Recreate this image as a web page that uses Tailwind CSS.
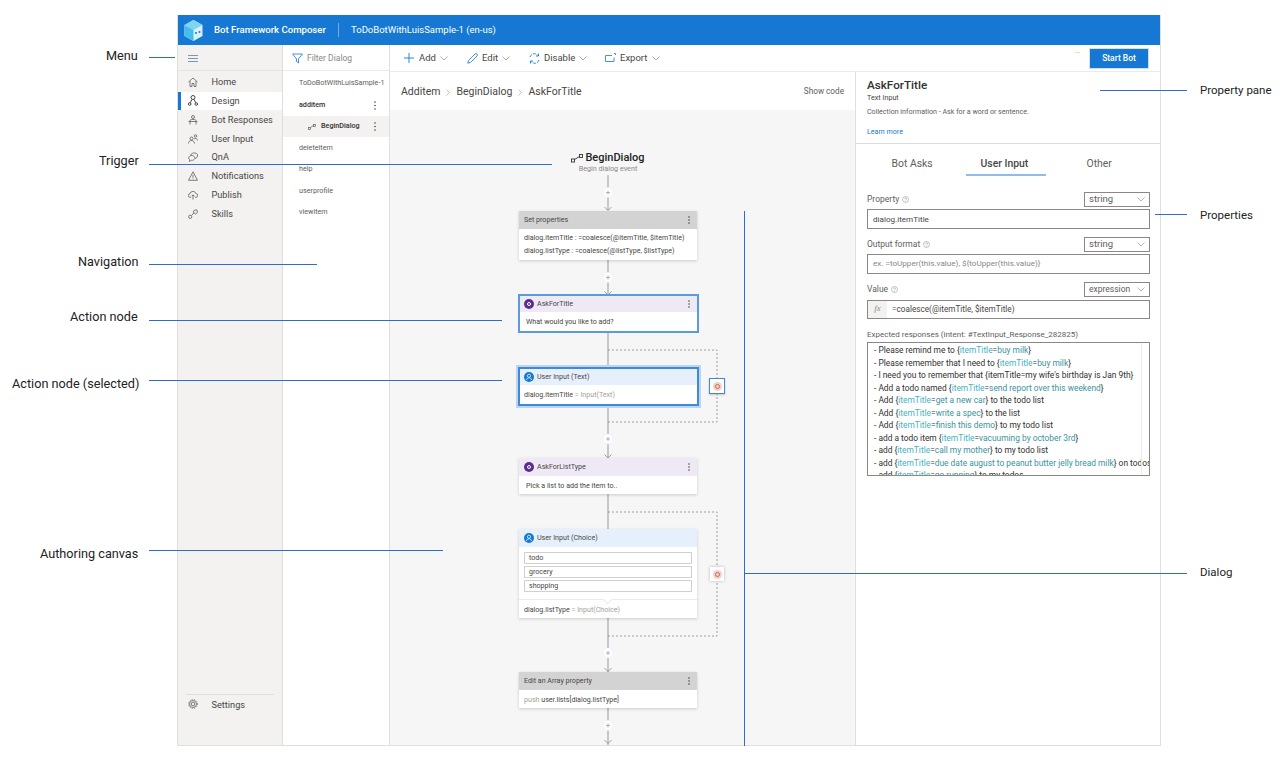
<!DOCTYPE html>
<html lang="en">
<head>
<meta charset="UTF-8" />
<title>Bot Framework Composer</title>
<script src="https://cdn.jsdelivr.net/npm/@tailwindcss/browser@4"></script>
</head>
<body class="relative w-[1285px] h-[760px] overflow-hidden bg-white font-['Roboto',sans-serif] text-[#323130]">

<!-- app frame -->
<div class="ml-[177px] mt-[15px] w-[984px] h-[731px] border-x border-b border-[#e1dfdd] flex flex-col">
  <!-- title bar -->
  <header class="h-[30px] shrink-0 bg-[#1678d3] text-white flex items-center pl-[6px]">
    <svg class="w-[19px] h-[21px]" viewBox="0 0 19 21"><polygon points="9.5,0 18.5,5 18.5,16 9.5,21 .5,16 .5,5" fill="#d6f1fb"/><polygon points="9.5,0 18.5,5 9.5,10 .5,5" fill="#7fd4f4"/><polygon points=".5,5 9.5,10 9.5,21 .5,16" fill="#45bdea"/><circle cx="12" cy="13" r="1" fill="#1678d3"/><circle cx="15.5" cy="12" r="1" fill="#1678d3"/></svg>
    <span class="ml-[11px] text-[9.6px] font-medium w-[113px] whitespace-nowrap">Bot Framework Composer</span>
    <span class="ml-[11px] w-px h-[14px] bg-white/40"></span>
    <span class="ml-[12px] text-[9.5px] whitespace-nowrap">ToDoBotWithLuisSample-1 (en-us)</span>
  </header>

  <div class="flex-1 flex min-h-0">
    <!-- main nav -->
    <nav class="w-[105px] shrink-0 bg-[#f3f2f1] border-r border-[#dfdddb] flex flex-col text-[9.2px] text-[#484644]">
      <div class="h-[26px] border-b border-[#e6e4e2] flex items-center pl-[10px]">
        <svg class="w-[10px] h-[7px] mt-[1px]" viewBox="0 0 10 7" fill="none" stroke="#5b7fa6" stroke-width=".8"><path d="M0 .5h10M0 3.5h10M0 6.5h10"/></svg>
      </div>
      <div class="pt-[1.8px]">
        <div class="h-[18.8px] flex items-center pl-[10px] gap-[13.5px]">
          <svg class="w-[10px] h-[10px]" viewBox="0 0 10 10" fill="none" stroke="#605e5c" stroke-width=".8"><path d="M.5 5 5 1l4.5 4M2 4v5.500h2V6.500h2v3h2V4"/></svg><span>Home</span>
        </div>
        <div class="h-[18.8px] flex items-center pl-[7px] gap-[13.5px] bg-white border-l-[3px] border-[#1678d3]">
          <svg class="w-[10px] h-[11px]" viewBox="0 0 10 11" fill="none" stroke="#323130" stroke-width=".9"><circle cx="5" cy="2.5" r="2"/><circle cx="1.7" cy="9" r="1.3"/><circle cx="8.3" cy="9" r="1.3"/><path d="M4 4.500 2.200 7.800M6 4.500l1.800 3.300"/></svg><span>Design</span>
        </div>
        <div class="h-[18.8px] flex items-center pl-[10px] gap-[13.5px]">
          <svg class="w-[10px] h-[10px]" viewBox="0 0 10 10" fill="none" stroke="#605e5c" stroke-width=".8"><circle cx="5" cy="2" r="1.5"/><path d="M2 9.500V6a1.500 1.500 0 0 1 1.500-1.500h3A1.500 1.500 0 0 1 8 6v3.500M.5 6.500h9"/></svg><span>Bot Responses</span>
        </div>
        <div class="h-[18.8px] flex items-center pl-[10px] gap-[13.5px]">
          <svg class="w-[10px] h-[10px]" viewBox="0 0 10 10" fill="none" stroke="#605e5c" stroke-width=".8"><circle cx="3.5" cy="4.5" r="1.5"/><circle cx="7.5" cy="2" r="1.3"/><path d="M.5 9.500c0-4 6-4 6 0M6 5c1.500-1.200 3.500-.5 3.500 1.500"/></svg><span>User Input</span>
        </div>
        <div class="h-[18.8px] flex items-center pl-[10px] gap-[13.5px]">
          <svg class="w-[10px] h-[10px]" viewBox="0 0 10 10" fill="none" stroke="#605e5c" stroke-width=".8"><path d="M2.500 3.200C3 1.500 5 .8 7 1s2.800 1.500 2.500 3S8 6.500 7 6.300"/><path d="M.7 6C.7 4.300 2.500 3.300 4.200 3.500S7 5 6.800 6.300 5 8.500 3.500 8.300L1.500 9.500l.2-1.800C1 7.300.7 6.700.7 6Z"/></svg><span>QnA</span>
        </div>
        <div class="h-[18.8px] flex items-center pl-[10px] gap-[13.5px]">
          <svg class="w-[10px] h-[10px]" viewBox="0 0 10 10" fill="none" stroke="#605e5c" stroke-width=".8"><path d="M5 .8.500 9.300h9ZM5 3.800v3M5 7.500v.8"/></svg><span>Notifications</span>
        </div>
        <div class="h-[18.8px] flex items-center pl-[10px] gap-[13.5px]">
          <svg class="w-[10px] h-[10px]" viewBox="0 0 10 10" fill="none" stroke="#605e5c" stroke-width=".8"><path d="M3 7.300H2.200A1.800 1.800 0 0 1 2 3.700 3 3 0 0 1 7.800 3.500 1.900 1.900 0 0 1 7.800 7.300H7M5 9.500V5M3.500 6.300 5 4.800l1.500 1.500"/></svg><span>Publish</span>
        </div>
        <div class="h-[18.8px] flex items-center pl-[10px] gap-[13.5px]">
          <svg class="w-[10px] h-[10px]" viewBox="0 0 10 10" fill="none" stroke="#605e5c" stroke-width=".8"><circle cx="2.2" cy="7.8" r="1.6"/><path d="M3.500 6.500 6 4M6 1.500 8.800.8 9.500 3.500 7.500 5 5.200 3.300Z"/></svg><span>Skills</span>
        </div>
      </div>
      <div class="mt-auto mx-[8px] h-[51px] border-t border-[#dfdddb] flex items-start pt-[3px] gap-[13.5px] pl-[2px]">
        <svg class="w-[10px] h-[10px] mt-[1px]" viewBox="0 0 10 10" fill="none" stroke="#605e5c" stroke-width=".8"><circle cx="5" cy="5" r="1.8"/><circle cx="5" cy="5" r="3.5"/><circle cx="5" cy="5" r="4.5" stroke-dasharray="1 1.400"/></svg><span>Settings</span>
      </div>
    </nav>

    <!-- dialog list -->
    <aside class="w-[107px] shrink-0 bg-white border-r border-[#e1dfdd] flex flex-col text-[7.2px] text-[#605e5c]">
      <div class="h-[26px] pt-[2px] border-b border-[#edebe9] flex items-center pl-[9px] gap-[4px] text-[8.5px] text-[#8a8886]">
        <svg class="w-[11px] h-[11px]" viewBox="0 0 11 11" fill="none" stroke="#1678d3" stroke-width=".8"><path d="M.5 1h10L6.500 5.800V10L4.500 8.500V5.800Z"/></svg><span>Filter Dialog</span>
      </div>
      <div class="pt-[1.5px]">
        <div class="h-[21.5px] flex items-center pl-[16px] pt-[1px] whitespace-nowrap">ToDoBotWithLuisSample-1</div>
        <div class="h-[21.5px] flex items-center justify-between pl-[16px] pr-[13px] pt-[1px] font-medium text-[#323130]">additem
          <svg class="w-[2px] h-[9px]" viewBox="0 0 2 9" fill="#484644"><circle cx="1" cy="1" r=".8"/><circle cx="1" cy="4.5" r=".8"/><circle cx="1" cy="8" r=".8"/></svg>
        </div>
        <div class="h-[21.5px] flex items-center bg-[#f3f2f1] pl-[25px] pr-[13px] pt-[1px] gap-[4px] font-medium text-[#323130]">
          <svg class="w-[8px] h-[6px]" viewBox="0 0 8 6" fill="none" stroke="#605e5c" stroke-width=".7"><rect x=".4" y="3.4" width="2" height="2"/><rect x="5.6" y=".4" width="2" height="2"/><path d="M2.400 3.400 5.600 1.500"/></svg>
          <span class="ml-[1px]">BeginDialog</span>
          <svg class="ml-auto w-[2px] h-[9px]" viewBox="0 0 2 9" fill="#484644"><circle cx="1" cy="1" r=".8"/><circle cx="1" cy="4.5" r=".8"/><circle cx="1" cy="8" r=".8"/></svg>
        </div>
        <div class="h-[21.5px] flex items-center pl-[16px] pt-[1px]">deleteitem</div>
        <div class="h-[21.5px] flex items-center pl-[16px] pt-[1px]">help</div>
        <div class="h-[21.5px] flex items-center pl-[16px] pt-[1px]">userprofile</div>
        <div class="h-[21.5px] flex items-center pl-[16px] pt-[1px]">viewitem</div>
      </div>
    </aside>

    <!-- main -->
    <main class="flex-1 min-w-0 flex flex-col">
      <!-- toolbar -->
      <div class="h-[27px] shrink-0 border-b border-[#edebe9] flex items-center pl-[14px] pr-[12px] text-[9.5px] text-[#484644]">
        <svg class="w-[10px] h-[10px]" viewBox="0 0 10 10" stroke="#1678d3" stroke-width=".9"><path d="M5 0v10M0 5h10"/></svg>
        <span class="ml-[5px] w-[17px]">Add</span>
        <svg class="ml-[4px] w-[8px] h-[5px]" viewBox="0 0 8 5" fill="none" stroke="#8a8886" stroke-width=".7"><path d="m.5.5 3.500 3.500L7.500.5"/></svg>
        <svg class="ml-[19px] w-[11px] h-[11px]" viewBox="0 0 11 11" fill="none" stroke="#1678d3" stroke-width=".8"><path d="M.8 10.200 1.500 7.500 8 1a1.300 1.300 0 0 1 2 2L3.500 9.500Z"/></svg>
        <span class="ml-[4px] w-[16px]">Edit</span>
        <svg class="ml-[4px] w-[8px] h-[5px]" viewBox="0 0 8 5" fill="none" stroke="#8a8886" stroke-width=".7"><path d="m.5.5 3.500 3.500L7.500.5"/></svg>
        <svg class="ml-[19px] w-[11px] h-[11px]" viewBox="0 0 11 11" fill="none" stroke="#1678d3" stroke-width=".9"><path d="M1 4A4.600 4.600 0 0 1 9 2.500M10 7A4.600 4.600 0 0 1 2 8.500" stroke-dasharray="3 1"/><path d="M9.500.5v2.500H7M1.500 10.500V8H4"/></svg>
        <span class="ml-[4px] w-[30px]">Disable</span>
        <svg class="ml-[5px] w-[8px] h-[5px]" viewBox="0 0 8 5" fill="none" stroke="#8a8886" stroke-width=".7"><path d="m.5.5 3.500 3.500L7.500.5"/></svg>
        <svg class="ml-[18px] w-[11px] h-[10px]" viewBox="0 0 11 10" fill="none" stroke="#1678d3" stroke-width=".8"><path d="M9 4.500V8.500H.5V2.500H7M9 .5h1.500V2"/></svg>
        <span class="ml-[4px] w-[27px]">Export</span>
        <svg class="ml-[5px] w-[8px] h-[5px]" viewBox="0 0 8 5" fill="none" stroke="#8a8886" stroke-width=".7"><path d="m.5.5 3.500 3.500L7.500.5"/></svg>
        <span class="ml-auto mb-[11px] w-[5px] h-px bg-[#f6e58d]"></span>
        <button class="ml-[10px] w-[58px] h-[19px] bg-[#1678d3] text-white text-[8.5px] font-medium shadow-[0_0_0_1px_#cfe2f5]">Start Bot</button>
      </div>

      <div class="flex-1 flex min-h-0">
        <!-- authoring area -->
        <section class="w-[466px] shrink-0 flex flex-col border-r border-[#e1dfdd]">
          <div class="h-[38px] shrink-0 pt-[2px] flex items-center pl-[11px] pr-[11px] text-[10.5px] text-[#484644]">
            <span>Additem</span>
            <svg class="mx-[6px] w-[4px] h-[7px]" viewBox="0 0 4 7" fill="none" stroke="#a19f9d" stroke-width=".6"><path d="m.5.5 3 3-3 3"/></svg>
            <span>BeginDialog</span>
            <svg class="mx-[6px] w-[4px] h-[7px]" viewBox="0 0 4 7" fill="none" stroke="#a19f9d" stroke-width=".6"><path d="m.5.5 3 3-3 3"/></svg>
            <span>AskForTitle</span>
            <span class="ml-auto mb-[2px] text-[8.2px] text-[#605e5c]">Show code</span>
          </div>

          <!-- visual canvas: nodes sit at fixed diagram positions -->
          <div class="relative flex-1 bg-[#f6f6f6] overflow-hidden">
            <svg class="absolute left-0 top-0 w-[465px] h-[635px]" viewBox="0 0 465 635" fill="none">
              <g stroke="#a8a8a8" stroke-width="1.2">
                <path d="M218 65v35M218 150v35M218 223v34M218 295v53M218 384v35M218 508v54M218 598v37"/>
              </g>
              <g stroke="#8a8a8a" stroke-width=".8">
                <path d="m214.500 97 3.500 3.500 3.500-3.500M214.500 181.500l3.500 3.500 3.500-3.500M214.500 344.500l3.500 3.500 3.500-3.500M214.500 558l3.500 3.500 3.500-3.500M214.500 630l3.500 3.500 3.500-3.500"/>
              </g>
              <g stroke="#8a8a8a" stroke-width=".8" stroke-dasharray="2 2">
                <path d="M218 240h109v72H218M218 402h109v124H218"/>
              </g>
              <g fill="#fff" stroke="#ededed" stroke-width=".6">
                <circle cx="218" cy="82.5" r="5"/><circle cx="218" cy="167.5" r="5"/><circle cx="218" cy="329" r="5"/><circle cx="218" cy="543" r="5"/><circle cx="218" cy="615.5" r="5"/>
              </g>
              <g stroke="#6f9fe2" stroke-width=".7">
                <path d="M218 80.500v4M216 82.500h4M218 165.500v4M216 167.500h4M218 327v4M216 329h4M218 541v4M216 543h4M218 613.500v4M216 615.500h4"/>
              </g>
            </svg>

            <!-- trigger -->
            <div class="absolute left-0 top-[41px] w-[436px] flex flex-col items-center">
              <div class="flex items-center gap-[2px] text-[11px] font-medium text-[#201f1e] leading-[14px]">
                <svg class="w-[12px] h-[9px]" viewBox="0 0 12 9" fill="none" stroke="#323130" stroke-width=".9"><rect x=".5" y="5" width="3" height="3"/><rect x="8.5" y=".5" width="3" height="3"/><path d="M3.500 5.500 8.500 2.500"/></svg>
                <span>BeginDialog</span>
              </div>
              <div class="text-[7.2px] leading-[8px] text-[#8a8886]">Begin dialog event</div>
            </div>

            <!-- Set properties -->
            <div class="absolute left-[129px] top-[101px] w-[178px] h-[49px] bg-white shadow-[0_1px_3px_rgba(0,0,0,0.18)] text-[7.1px] text-[#484644]">
              <div class="h-[18px] bg-[#d3d3d3] flex items-center justify-between pl-[5px] pr-[7px]"><span>Set properties</span>
                <svg class="w-[2px] h-[8px]" viewBox="0 0 2 8" fill="#484644"><circle cx="1" cy="1" r=".8"/><circle cx="1" cy="4" r=".8"/><circle cx="1" cy="7" r=".8"/></svg></div>
              <div class="pl-[5px] pt-[2px] leading-[13px]">
                <div>dialog.itemTitle : =coalesce(@itemTitle, $itemTitle)</div>
                <div>dialog.listType : =coalesce(@listType, $listType)</div>
              </div>
            </div>

            <!-- AskForTitle -->
            <div class="absolute left-[128px] top-[184px] w-[181px] h-[39px] bg-white border-2 border-[#5b9bdd] text-[7.1px] text-[#484644]">
              <div class="h-[16px] bg-[#efe9f5] flex items-center pl-[4px] pr-[7px] gap-[3px]">
                <span class="w-[10px] h-[10px] rounded-full bg-[#5c2d91] flex items-center justify-center"><span class="w-[4px] h-[4px] rounded-full border-[0.7px] border-white"></span></span>
                <span>AskForTitle</span>
                <svg class="ml-auto w-[2px] h-[8px]" viewBox="0 0 2 8" fill="#484644"><circle cx="1" cy="1" r=".8"/><circle cx="1" cy="4" r=".8"/><circle cx="1" cy="7" r=".8"/></svg>
              </div>
              <div class="pl-[6px] pt-[5px] leading-[10px]">What would you like to add?</div>
            </div>

            <!-- User Input (Text), selected -->
            <div class="absolute left-[128px] top-[257px] w-[181px] h-[39px] bg-white border-2 border-[#3f8ad8] shadow-[0_0_0_2px_#bcd6f1] text-[7.1px] text-[#484644]">
              <div class="h-[16px] bg-[#e5f0fc] flex items-center pl-[4px] gap-[3px]">
                <svg class="w-[10px] h-[10px]" viewBox="0 0 10 10"><circle cx="5" cy="5" r="5" fill="#1678d3"/><circle cx="5" cy="3.8" r="1.6" fill="none" stroke="#fff" stroke-width=".7"/><path d="M2.500 8c.4-3 4.600-3 5 0" fill="none" stroke="#fff" stroke-width=".7"/></svg>
                <span>User Input (Text)</span>
              </div>
              <div class="pl-[4px] pt-[5px] leading-[10px]">dialog.itemTitle <span class="text-[#a19f9d]">= Input(Text)</span></div>
            </div>
            <div class="absolute left-[319px] top-[268px] w-[16px] h-[16px] bg-white border border-[#3f8ad8] shadow-[0_1px_2px_rgba(0,0,0,0.2)] flex items-center justify-center">
              <span class="w-[9px] h-[9px] rounded-full bg-[#f8cfc6] flex items-center justify-center"><span class="w-[5px] h-[5px] rounded-full border-[0.7px] border-[#b8705f]"></span></span>
            </div>

            <!-- AskForListType -->
            <div class="absolute left-[129px] top-[348px] w-[178px] h-[36px] bg-white shadow-[0_1px_3px_rgba(0,0,0,0.18)] text-[7.1px] text-[#484644]">
              <div class="h-[18px] bg-[#efe9f5] flex items-center pl-[5px] pr-[7px] gap-[3px]">
                <span class="w-[10px] h-[10px] rounded-full bg-[#5c2d91] flex items-center justify-center"><span class="w-[4px] h-[4px] rounded-full border-[0.7px] border-white"></span></span>
                <span>AskForListType</span>
                <svg class="ml-auto w-[2px] h-[8px]" viewBox="0 0 2 8" fill="#484644"><circle cx="1" cy="1" r=".8"/><circle cx="1" cy="4" r=".8"/><circle cx="1" cy="7" r=".8"/></svg>
              </div>
              <div class="pl-[7px] pt-[5px] leading-[10px]">Pick a list to add the item to..</div>
            </div>

            <!-- User Input (Choice) -->
            <div class="absolute left-[129px] top-[419px] w-[178px] h-[89px] bg-white shadow-[0_1px_3px_rgba(0,0,0,0.18)] text-[7.1px] text-[#484644]">
              <div class="h-[18px] bg-[#e5f0fc] flex items-center pl-[5px] gap-[3px]">
                <svg class="w-[10px] h-[10px]" viewBox="0 0 10 10"><circle cx="5" cy="5" r="5" fill="#1678d3"/><circle cx="5" cy="3.8" r="1.6" fill="none" stroke="#fff" stroke-width=".7"/><path d="M2.500 8c.4-3 4.600-3 5 0" fill="none" stroke="#fff" stroke-width=".7"/></svg>
                <span>User Input (Choice)</span>
              </div>
              <div class="px-[5px] pt-[5px] flex flex-col gap-[2px]">
                <div class="h-[12px] border border-[#d0d0d0] pl-[4px] pt-[0.5px] flex items-center">todo</div>
                <div class="h-[12px] border border-[#d0d0d0] pl-[4px] pt-[0.5px] flex items-center">grocery</div>
                <div class="h-[12px] border border-[#d0d0d0] pl-[4px] pt-[0.5px] flex items-center">shopping</div>
              </div>
              <div class="relative mt-[7px] border-t border-[#ebebeb] pl-[5px] pt-[5px] leading-[10px]">
                <span class="absolute left-[85px] top-[-4px] w-[7px] h-[7px] bg-white border-r border-b border-[#ebebeb] rotate-45"></span>
                <span class="relative">dialog.listType <span class="text-[#a19f9d]">= Input(Choice)</span></span>
              </div>
            </div>
            <div class="absolute left-[320px] top-[457px] w-[14px] h-[14px] bg-white shadow-[0_0_3px_rgba(0,0,0,0.25)] flex items-center justify-center">
              <span class="w-[9px] h-[9px] rounded-full bg-[#f8cfc6] flex items-center justify-center"><span class="w-[5px] h-[5px] rounded-full border-[0.7px] border-[#b8705f]"></span></span>
            </div>

            <!-- Edit an Array property -->
            <div class="absolute left-[129px] top-[562px] w-[178px] h-[36px] bg-white shadow-[0_1px_3px_rgba(0,0,0,0.18)] text-[7.1px] text-[#484644]">
              <div class="h-[18px] bg-[#d3d3d3] flex items-center justify-between pl-[5px] pr-[7px]"><span>Edit an Array property</span>
                <svg class="w-[2px] h-[8px]" viewBox="0 0 2 8" fill="#484644"><circle cx="1" cy="1" r=".8"/><circle cx="1" cy="4" r=".8"/><circle cx="1" cy="7" r=".8"/></svg></div>
              <div class="pl-[5px] pt-[5px] leading-[10px]"><span class="text-[#a19f9d]">push</span> user.lists[dialog.listType]</div>
            </div>
          </div>
        </section>

        <!-- property pane -->
        <section class="flex-1 min-w-0 bg-white flex flex-col text-[#605e5c]">
          <div class="h-[72px] shrink-0 border-b border-[#dcdcdc] pl-[11px] pt-[6px]">
            <div class="text-[11.7px] leading-[15px] font-medium text-[#323130]">AskForTitle</div>
            <div class="text-[7.2px] leading-[10px] text-[#484644]">Text Input</div>
            <div class="text-[7.1px] leading-[10px] mt-[4px]">Collection information - Ask for a word or sentence.</div>
            <div class="text-[7.1px] leading-[10px] mt-[10px] text-[#1678d3]">Learn more</div>
          </div>
          <div class="h-[33px] shrink-0 relative text-[10.4px]">
            <span class="absolute left-[35.5px] top-[12px]">Bot Asks</span>
            <span class="absolute left-[124.5px] top-[12px] font-medium text-[#484644]">User Input</span>
            <span class="absolute left-[230.5px] top-[12px]">Other</span>
            <span class="absolute left-[110px] top-[30px] w-[80px] h-[1.5px] bg-[#8fbcec]"></span>
          </div>
          <div class="pl-[11px] pr-[10px] text-[8.5px]">
            <div class="mt-[14.5px] h-[15px] flex items-center">
              <span>Property</span>
              <svg class="ml-[3px] w-[7px] h-[7px]" viewBox="0 0 7 7" fill="none" stroke="#8a8886" stroke-width=".5"><circle cx="3.5" cy="3.5" r="3"/><path d="M2.500 2.700C2.500 1.500 4.500 1.500 4.500 2.700 4.500 3.500 3.500 3.400 3.500 4.500M3.500 5v.6"/></svg>
              <div class="ml-auto w-[66px] h-[15px] border border-[#8a8886] flex items-center justify-between pl-[4px] pr-[4px] text-[9.5px]">string
                <svg class="w-[8px] h-[5px]" viewBox="0 0 8 5" fill="none" stroke="#8a8886" stroke-width=".6"><path d="m.5.5 3.500 3.500L7.500.5"/></svg></div>
            </div>
            <div class="mt-[2px] h-[20px] pt-[1px] border border-[#8a8886] flex items-center pl-[5px] text-[8.1px] text-[#484644]">dialog.itemTitle</div>
            <div class="mt-[8px] h-[15px] flex items-center">
              <span>Output format</span>
              <svg class="ml-[3px] w-[7px] h-[7px]" viewBox="0 0 7 7" fill="none" stroke="#8a8886" stroke-width=".5"><circle cx="3.5" cy="3.5" r="3"/><path d="M2.500 2.700C2.500 1.500 4.500 1.500 4.500 2.700 4.500 3.500 3.500 3.400 3.500 4.500M3.500 5v.6"/></svg>
              <div class="ml-auto w-[66px] h-[15px] border border-[#8a8886] flex items-center justify-between pl-[4px] pr-[4px] text-[9.5px]">string
                <svg class="w-[8px] h-[5px]" viewBox="0 0 8 5" fill="none" stroke="#8a8886" stroke-width=".6"><path d="m.5.5 3.500 3.500L7.500.5"/></svg></div>
            </div>
            <div class="mt-[2px] h-[20px] border border-[#8a8886] flex items-center pl-[5px] text-[8.1px] text-[#8a8886]">ex. =toUpper(this.value), ${toUpper(this.value)}</div>
            <div class="mt-[8px] h-[15px] flex items-center">
              <span>Value</span>
              <svg class="ml-[3px] w-[7px] h-[7px]" viewBox="0 0 7 7" fill="none" stroke="#8a8886" stroke-width=".5"><circle cx="3.5" cy="3.5" r="3"/><path d="M2.500 2.700C2.500 1.500 4.500 1.500 4.500 2.700 4.500 3.500 3.500 3.400 3.500 4.500M3.500 5v.6"/></svg>
              <div class="ml-auto w-[66px] h-[15px] border border-[#8a8886] flex items-center justify-between pl-[4px] pr-[4px]">expression
                <svg class="w-[8px] h-[5px]" viewBox="0 0 8 5" fill="none" stroke="#8a8886" stroke-width=".6"><path d="m.5.5 3.500 3.500L7.500.5"/></svg></div>
            </div>
            <div class="mt-[3px] h-[19px] border border-[#8a8886] flex items-center text-[8.2px] text-[#484644]">
              <span class="w-[19px] h-full bg-[#f3f2f1] flex items-center justify-center font-['Liberation_Serif',serif] italic text-[#8a8886] text-[9px]">fx</span>
              <span class="ml-[5px] pt-[1px]">=coalesce(@itemTitle, $itemTitle)</span>
            </div>
            <div class="mt-[10px] leading-[11px] text-[8px]">Expected responses (intent: #TextInput_Response_282825)</div>
            <div class="relative mt-[2px] h-[134px] border border-[#8a8886] overflow-hidden pl-[6px] pt-[1.5px] text-[8.4px] leading-[12.5px] text-[#323130] whitespace-nowrap">
              <span class="absolute right-[7px] top-0 bottom-0 w-px bg-[#ececec]"></span>
              <div>- Please remind me to {<span class="text-[#45b3c0]">itemTitle</span>=<span class="text-[#3a939c]">buy milk</span>}</div>
              <div>- Please remember that I need to {<span class="text-[#45b3c0]">itemTitle</span>=<span class="text-[#3a939c]">buy milk</span>}</div>
              <div>- I need you to remember that {itemTitle=my wife's birthday is Jan 9th}</div>
              <div>- Add a todo named {<span class="text-[#45b3c0]">itemTitle</span>=<span class="text-[#3a939c]">send report over this weekend</span>}</div>
              <div>- Add {<span class="text-[#45b3c0]">itemTitle</span>=<span class="text-[#3a939c]">get a new car</span>} to the todo list</div>
              <div>- Add {<span class="text-[#45b3c0]">itemTitle</span>=<span class="text-[#3a939c]">write a spec</span>} to the list</div>
              <div>- Add {<span class="text-[#45b3c0]">itemTitle</span>=<span class="text-[#3a939c]">finish this demo</span>} to my todo list</div>
              <div>- add a todo item {<span class="text-[#45b3c0]">itemTitle</span>=<span class="text-[#3a939c]">vacuuming by october 3rd</span>}</div>
              <div>- add {<span class="text-[#45b3c0]">itemTitle</span>=<span class="text-[#3a939c]">call my mother</span>} to my todo list</div>
              <div>- add {<span class="text-[#45b3c0]">itemTitle</span>=<span class="text-[#3a939c]">due date august to peanut butter jelly bread milk</span>} on todos</div>
              <div>- add {<span class="text-[#45b3c0]">itemTitle</span>=<span class="text-[#3a939c]">go running</span>} to my todos</div>
            </div>
          </div>
        </section>
      </div>
    </main>
  </div>
</div>

<!-- callouts laid over the screenshot -->
<div class="absolute inset-0 pointer-events-none text-[12.7px] leading-[16px] text-[#222]">
  <span class="absolute left-[106px] top-[48px]">Menu</span>
  <span class="absolute left-[99px] top-[153px]">Trigger</span>
  <span class="absolute left-[78px] top-[254px]">Navigation</span>
  <span class="absolute left-[70px] top-[309px]">Action node</span>
  <span class="absolute left-[12px] top-[376px]">Action node (selected)</span>
  <span class="absolute left-[40px] top-[546px]">Authoring canvas</span>
  <span class="absolute left-[1200px] top-[82px] text-[11.5px]">Property pane</span>
  <span class="absolute left-[1200px] top-[207px] text-[11.5px]">Properties</span>
  <span class="absolute left-[1200px] top-[564px] text-[11.5px]">Dialog</span>
  <span class="absolute left-[149px] top-[57px] w-[26px] h-px bg-[#2f6dc4]"></span>
  <span class="absolute left-[149px] top-[164px] w-[403px] h-px bg-[#2f6dc4]"></span>
  <span class="absolute left-[149px] top-[264px] w-[168px] h-px bg-[#2f6dc4]"></span>
  <span class="absolute left-[149px] top-[320px] w-[353px] h-px bg-[#2f6dc4]"></span>
  <span class="absolute left-[149px] top-[380px] w-[353px] h-px bg-[#2f6dc4]"></span>
  <span class="absolute left-[149px] top-[550px] w-[294px] h-px bg-[#2f6dc4]"></span>
  <span class="absolute left-[1100px] top-[90px] w-[87px] h-px bg-[#2f6dc4]"></span>
  <span class="absolute left-[1155px] top-[214px] w-[32px] h-px bg-[#2f6dc4]"></span>
  <span class="absolute left-[745px] top-[573px] w-[442px] h-px bg-[#2f6dc4]"></span>
  <span class="absolute left-[744px] top-[211px] w-px h-[535px] bg-[#2f6dc4]"></span>
</div>
</body>
</html>
